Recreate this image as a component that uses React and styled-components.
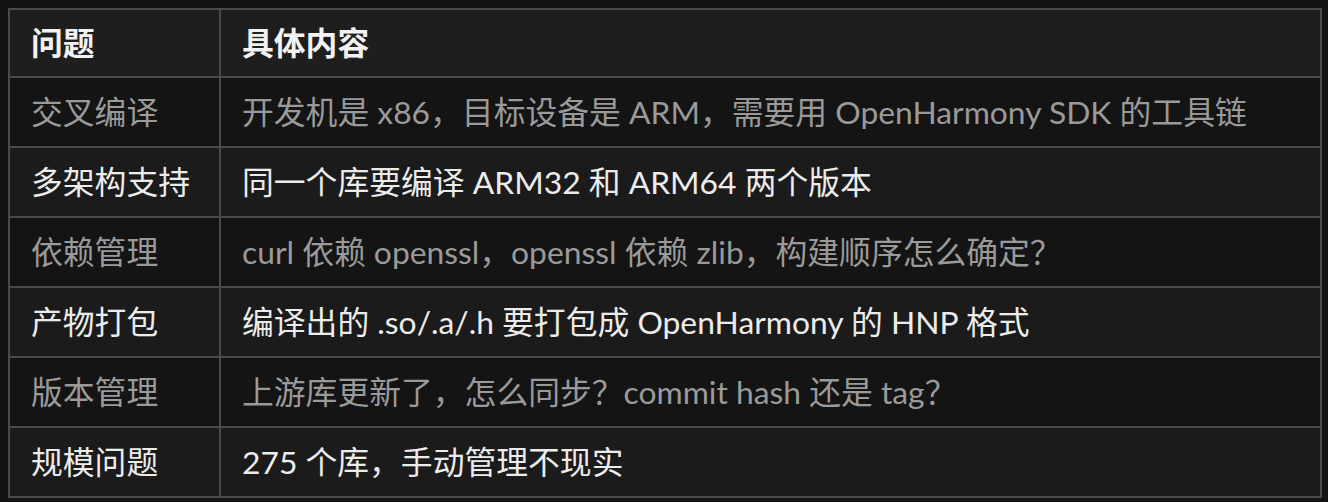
import React from "react";
import styled, { createGlobalStyle } from "styled-components";

const GlobalStyle = createGlobalStyle`
  body {
    margin: 0;
    background: #131313;
  }
`;

const Page = styled.div`
  padding: 8px 6px 6px 8px;
  font-family: Lato, "Noto Sans CJK SC", sans-serif;
`;

const Table = styled.table`
  width: 100%;
  border-collapse: collapse;
  border: 2px solid #4a4a4a;
`;

const HeadCell = styled.th`
  text-align: left;
  font-weight: 700;
  font-size: 31.8px;
  color: #f2f2f2;
  background: #1e1e1e;
  padding: 0 21px 5px;
  height: 61px;
  border: 2px solid #4a4a4a;
  width: ${({ $w }) => $w || "auto"};
`;

const Row = styled.tr`
  background: ${({ $alt }) => ($alt ? "#1b1b1b" : "#141414")};
  color: ${({ $alt }) => ($alt ? "#ececec" : "#9a9a9a")};
`;

const Cell = styled.td`
  font-size: 31.8px;
  padding: 0 21px 5px;
  height: 63px;
  border: 2px solid #4a4a4a;
  white-space: nowrap;
`;

const rows = [
  ["交叉编译", "开发机是 x86，目标设备是 ARM，需要用 OpenHarmony SDK 的工具链"],
  ["多架构支持", "同一个库要编译 ARM32 和 ARM64 两个版本"],
  ["依赖管理", "curl 依赖 openssl，openssl 依赖 zlib，构建顺序怎么确定？"],
  ["产物打包", "编译出的 .so/.a/.h 要打包成 OpenHarmony 的 HNP 格式"],
  ["版本管理", "上游库更新了，怎么同步？commit hash 还是 tag？"],
  ["规模问题", "275 个库，手动管理不现实"],
];

const App = () => (
  <>
    <GlobalStyle />
    <Page>
      <Table>
        <thead>
          <tr>
            <HeadCell $w="167px">问题</HeadCell>
            <HeadCell>具体内容</HeadCell>
          </tr>
        </thead>
        <tbody>
          {rows.map(([k, v], i) => (
            <Row key={k} $alt={i % 2 === 1}>
              <Cell>{k}</Cell>
              <Cell>{v}</Cell>
            </Row>
          ))}
        </tbody>
      </Table>
    </Page>
  </>
);

export default App;
